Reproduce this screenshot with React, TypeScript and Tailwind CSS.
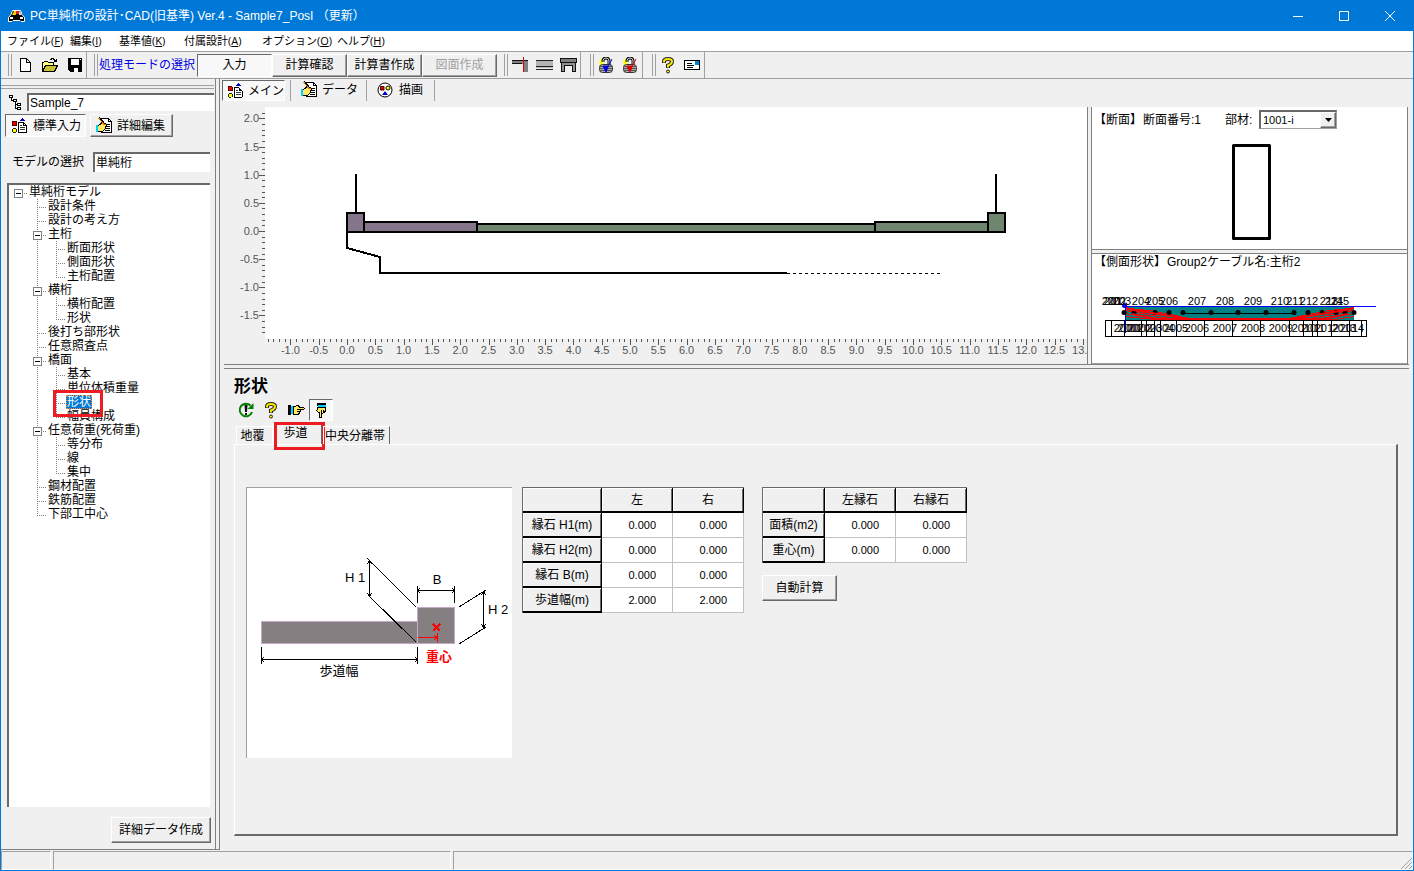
import React, { useState } from 'react';
import clsx from 'clsx';

const raised = 'border border-t-white border-l-white border-r-[#696969] border-b-[#696969] shadow-[inset_-1px_-1px_0_#a0a0a0]';
const pressed = 'border border-t-[#696969] border-l-[#696969] border-r-white border-b-white bg-[#f8f8f8]';
const sunken = 'border-t-2 border-l-2 border-t-[#696969] border-l-[#696969] bg-white';

interface TreeNode {
  label: string;
  level: number;
  open?: boolean;
  last?: boolean;
}

const treeNodes: TreeNode[] = [
  { label: '単純桁モデル', level: 0, open: true },
  { label: '設計条件', level: 1 },
  { label: '設計の考え方', level: 1 },
  { label: '主桁', level: 1, open: true },
  { label: '断面形状', level: 2 },
  { label: '側面形状', level: 2 },
  { label: '主桁配置', level: 2, last: true },
  { label: '横桁', level: 1, open: true },
  { label: '横桁配置', level: 2 },
  { label: '形状', level: 2, last: true },
  { label: '後打ち部形状', level: 1 },
  { label: '任意照査点', level: 1 },
  { label: '橋面', level: 1, open: true },
  { label: '基本', level: 2 },
  { label: '単位体積重量', level: 2 },
  { label: '形状', level: 2 },
  { label: '幅員構成', level: 2, last: true },
  { label: '任意荷重(死荷重)', level: 1, open: true },
  { label: '等分布', level: 2 },
  { label: '線', level: 2 },
  { label: '集中', level: 2, last: true },
  { label: '鋼材配置', level: 1 },
  { label: '鉄筋配置', level: 1 },
  { label: '下部工中心', level: 1, last: true },
];

const menus = [
  { label: 'ファイル', key: 'F', width: 'w-[63px]' },
  { label: '編集', key: 'I', width: 'w-[49px]' },
  { label: '基準値', key: 'K', width: 'w-[65px]' },
  { label: '付属設計', key: 'A', width: 'w-[78px]' },
  { label: 'オプション', key: 'O', width: 'w-[75px]' },
  { label: 'ヘルプ', key: 'H', width: 'w-[63px]' },
];

/* ---------- icons ---------- */

const AppIcon = () => (
  <svg width="17" height="14" viewBox="0 0 17 14">
    <path d="M4.500 1.500h8l1.500 4 2.500 3v4h-3.500l-1-1h-7l-1 1H.5v-4l2.500-3z" fill="#000" stroke="#fff" />
    <path d="M4 6l2-4h2v4z" fill="#ffd000" />
    <path d="M8 2h3v3H8z" fill="#e02020" />
    <path d="M11 2.500h1.500l1 3.500H11z" fill="#ddd" />
    <path d="M2 8h3v2H2zM12 8h3v2h-3z" fill="#fff" />
  </svg>
);

const NewIcon = () => (
  <svg width="16" height="16" viewBox="0 0 16 16" shapeRendering="crispEdges">
    <path d="M3.500 1.500h6l4 4v9h-10zM9.500 1.500v4h4" fill="#fff" stroke="#000" />
  </svg>
);

const OpenIcon = () => (
  <svg width="18" height="16" viewBox="0 0 18 16" shapeRendering="crispEdges">
    <path d="M1.500 14.500v-9h1l1-1h3l1 1h5v3" fill="#ffff80" stroke="#000" />
    <path d="M1.500 14.500l3-6h12l-3 6z" fill="#c8c030" stroke="#000" />
    <path d="M9.500 2.500l2-1 2 1 1 2M15.500 1.500v3h-3" fill="none" stroke="#000" />
  </svg>
);

const SaveIcon = () => (
  <svg width="16" height="16" viewBox="0 0 16 16" shapeRendering="crispEdges">
    <path d="M1 1h14v14H3l-2-2z" fill="#000" />
    <path d="M4 2h8v6H4zM5 11h6v4H5z" fill="#fff" />
    <path d="M5 11h2v4H5z" fill="#000" />
    <path d="M13 2h1v1h-1z" fill="#fff" />
  </svg>
);

const BeamEndIcon = () => (
  <svg width="18" height="16" viewBox="0 0 18 16" shapeRendering="crispEdges">
    <path d="M1 3h16v12h-4V9l-2-2H1z" fill="#808080" />
    <path d="M1 3h16v1H1zM1 6h10v1H1z" fill="#111" />
    <path d="M12 0h1v15h-1z" fill="#e00" />
  </svg>
);

const BeamIcon = () => (
  <svg width="17" height="16" viewBox="0 0 17 16" shapeRendering="crispEdges">
    <path d="M0 3h17v8H0z" fill="#b4b4b4" />
    <path d="M0 3h17v1H0zM0 9h17v1H0zM0 12h17v1H0z" fill="#222" />
  </svg>
);

const PierIcon = () => (
  <svg width="17" height="16" viewBox="0 0 17 16" shapeRendering="crispEdges">
    <path d="M.5 1.500h16v4H.5z" fill="#808080" stroke="#111" />
    <path d="M1.500 5.500h14v9h-3v-6h-8v6h-3z" fill="#909090" stroke="#111" />
  </svg>
);

const LockIcon = ({ color }: { color: string }) => (
  <svg width="16" height="16" viewBox="0 0 16 16">
    <path d="M0 4h3L2 1l3 2 1 3-2 1-3 2 1-3z" fill="#ff0" />
    <path d="M5 5V4q0-3 3-3t3 3v4" fill="none" stroke="#111" strokeWidth="3" />
    <path d="M5 5V4q0-3 3-3t3 3v4" fill="none" stroke="#ccc" />
    <rect x="1.500" y="7.500" width="13" height="8" rx="3" fill="#aaa" stroke="#333" />
    <path d="M2 9.500h12M2 11.500h12M2 13.500h12" stroke="#555" />
    <path d="M5 9h5l-2 6zM8 14l6-12" fill={color} stroke={color} />
  </svg>
);

const HelpIcon = () => (
  <svg width="14" height="17" viewBox="0 0 14 17">
    <path d="M3 6V4.500Q3 2 7 2t4 2.500Q11 7 7 8.500V11" fill="none" stroke="#222" strokeWidth="4" />
    <path d="M3 5.500V4.500Q3 2 7 2t4 2.500Q11 7 7 8.500v2" fill="none" stroke="#ffe800" strokeWidth="2" />
    <circle cx="7" cy="14.500" r="1.500" fill="#ffe800" stroke="#222" />
  </svg>
);

const CardIcon = () => (
  <svg width="17" height="12" viewBox="0 0 17 12" shapeRendering="crispEdges">
    <rect x=".5" y="1.500" width="15" height="9" rx="1" fill="#fff" stroke="#000" />
    <path d="M3 4h5v1H3zM3 6h7v1H3zM3 8h6v1H3z" fill="#000" />
    <path d="M11 2h4v4h-4z" fill="#08c" />
  </svg>
);

const HierarchyIcon = () => (
  <svg width="14" height="16" viewBox="0 0 14 16" shapeRendering="crispEdges">
    <path d="M.5 1.500h3v2h-3zM4.500 5.500h3v2h-3zM8.500 9.500h3v2h-3zM8.500 13.500h3v2h-3z" fill="#fff" stroke="#000" />
    <path d="M2.500 4v2.500H4M6.500 8v6.500H8M6.500 10.500H8" fill="none" stroke="#000" />
  </svg>
);

const InputIcon = () => (
  <svg width="17" height="17" viewBox="0 0 17 17" shapeRendering="crispEdges">
    <path d="M1.500 4.500h4v4h-4z" fill="#e00" stroke="#500" />
    <path d="M2.500 11.500h2l1 1v2l-1 1h-2l-1-1v-2z" fill="#ff0" stroke="#222" />
    <path d="M11.500 1L14 4H9z" fill="#00c" />
    <path d="M7.500 5.500h5l3 3v7h-8zM12.500 5.500v3h3" fill="#fff" stroke="#000" />
    <path d="M9 8h2v1H9zM9 10h5v1H9zM9 12h5v1H9z" fill="#333" />
  </svg>
);

const EditIcon = () => (
  <svg width="17" height="17" viewBox="0 0 17 17" shapeRendering="crispEdges">
    <path d="M5.500 1.500h7l3 3v11h-10z" fill="#fff" stroke="#000" />
    <path d="M12.500 1.500v3h3M10 7h4M11 9h3M10 11h4M9 13h5" fill="none" stroke="#000" />
    <path d="M1 8h2l3-2 4 1 1 2-2 1v2l-2 2H3l-2 1z" fill="#ffe860" stroke="#000" />
    <path d="M0 8h2v7H0z" fill="#0cf" />
    <path d="M3 1l6 7" stroke="#d80" strokeWidth="2" />
    <path d="M3 0l6 7" stroke="#000" />
  </svg>
);

const DrawIcon = () => (
  <svg width="16" height="16" viewBox="0 0 16 16">
    <circle cx="8" cy="8" r="7" fill="#fff" stroke="#000" />
    <path d="M3.500 4.500h3.500v3.500H3.500z" fill="#e00" stroke="#400" />
    <circle cx="11" cy="6" r="2" fill="#ff0" stroke="#000" />
    <path d="M8 9l3 4H5z" fill="#00c" />
  </svg>
);

const RefreshIcon = () => (
  <svg width="16" height="16" viewBox="0 0 16 16">
    <path d="M12.500 3.500A6.300 6.300 0 1 0 14 10" fill="none" stroke="#008000" strokeWidth="2" />
    <path d="M15.500 1v6h-6z" fill="#008000" />
    <path d="M6.500 3h3L9 10H7zM7 11h2v2H7z" fill="#111" />
  </svg>
);

const HandRightIcon = () => (
  <svg width="17" height="12" viewBox="0 0 17 12" shapeRendering="crispEdges">
    <path d="M0 1h3v10H0z" fill="#000" />
    <path d="M3 2h2v8H3z" fill="#0cf" />
    <path d="M5.500 2.500h2l1-1h2l1 2h4l1 1-1 1h-3v2h-1v2h-1v1h-5z" fill="#ffe860" stroke="#000" />
    <path d="M9 5.500h3M9 7.500h2" stroke="#000" />
  </svg>
);

const HandDownIcon = () => (
  <svg width="12" height="17" viewBox="0 0 12 17" shapeRendering="crispEdges">
    <path d="M2 1h9v3H2z" fill="#000" />
    <path d="M3 3h8v2H3z" fill="#0cf" />
    <path d="M2.500 5.500h8v3l-1 2h-1l-1 1h-1v4h-2v-5h-1l-2-2 1-1z" fill="#ffe860" stroke="#000" />
    <path d="M6.500 8v3M8.500 8v2" stroke="#000" />
  </svg>
);

/* ---------- small parts ---------- */

const Grip = () => (
  <span className="flex h-[22px] shrink-0 gap-[2px]">
    <span className="w-px bg-[#a0a0a0]" />
    <span className="w-px bg-[#a0a0a0]" />
  </span>
);

function IconButton({ label, children }: { label: string; children: React.ReactNode }) {
  return (
    <button type="button" aria-label={label} className="flex h-[22px] w-6 shrink-0 items-center justify-center">
      {children}
    </button>
  );
}

function TreeGuide({ node }: { node: TreeNode }) {
  const { level, open, last } = node;
  const width = 19 + level * 19;
  const x = level * 19 + 9;
  const dots = { stroke: '#808080', strokeDasharray: '1 1' };
  return (
    <svg width={width} height="14" className="shrink-0" shapeRendering="crispEdges">
      {level === 2 && <line x1="28.5" x2="28.5" y1="0" y2="14" {...dots} />}
      {level > 0 && <line x1={x + 0.5} x2={x + 0.5} y1="0" y2={last ? 8 : 14} {...dots} />}
      <line x1={x} x2={width - 1} y1="8.5" y2="8.5" {...dots} />
      {open && (
        <>
          <rect x={x - 3.5} y="4.5" width="8" height="8" fill="#fff" stroke="#808080" />
          <line x1={x - 2} x2={x + 3} y1="8.5" y2="8.5" stroke="#000" />
        </>
      )}
    </svg>
  );
}

function SectionChart() {
  const px = (v: number) => 127 + v * 56.6;
  const py = (v: number) => 124 - v * 56.3;
  const xTicks = Array.from({ length: 146 }, (_, i) => (i - 14) / 10);
  const yTicks = Array.from({ length: 40 }, (_, i) => (i - 18) / 10);
  return (
    <svg width="100%" height="257" className="block" shapeRendering="crispEdges">
      <rect x="45" y="0" width="100%" height="232" fill="#fff" />
      <g stroke="#555">
        {xTicks.map(v => (
          <line key={v} x1={Math.round(px(v)) + 0.5} x2={Math.round(px(v)) + 0.5} y1="232" y2={(v * 10) % 5 === 0 ? 238 : 235} />
        ))}
        {yTicks.map(v => (
          <line key={v} x1={(v * 10) % 5 === 0 ? 39 : 42} x2="45" y1={Math.round(py(v)) + 0.5} y2={Math.round(py(v)) + 0.5} />
        ))}
      </g>
      <g fill="#555" fontSize="11">
        {xTicks.filter(v => (v * 10) % 5 === 0 && v >= -1).map(v => (
          <text key={v} x={px(v)} y="247" textAnchor="middle">{v.toFixed(1)}</text>
        ))}
        {yTicks.filter(v => (v * 10) % 5 === 0).map(v => (
          <text key={v} x="39" y={py(v) + 4} textAnchor="end">{v.toFixed(1)}</text>
        ))}
      </g>
      <g stroke="#000" strokeWidth="2">
        <g fill="#85758a">
          <rect x="127" y="106" width="17" height="19" />
          <rect x="144" y="115" width="113" height="10" />
        </g>
        <g fill="#6f8570">
          <rect x="257" y="117" width="398" height="8" />
          <rect x="655" y="115" width="113" height="10" />
          <rect x="768" y="106" width="17" height="19" />
        </g>
        <path d="M136 67v38M776 67v38" />
        <path d="M127 125v16l33 9v16h407" fill="none" />
        <path d="M567 166.500h153" strokeWidth="1" strokeDasharray="3 3" />
      </g>
    </svg>
  );
}

const upperLabels: [string, number][] = [
  ['200', 19], ['201', 21], ['202', 25], ['203', 30], ['204', 49], ['205', 63], ['206', 77], ['207', 105],
  ['208', 133], ['209', 161], ['210', 188], ['211', 203], ['212', 217], ['213', 237], ['214', 242], ['215', 248],
];
const lowerLabels: [string, number][] = [
  ['2000', 34], ['2001', 38], ['2002', 48], ['2003', 58], ['2004', 70], ['2005', 84], ['2006', 105], ['2007', 133],
  ['2008', 161], ['2009', 189], ['2010', 212], ['2011', 221], ['2012', 235], ['2013', 252], ['2014', 260],
];
const cellLines = [13, 19, 32, 49, 54, 62, 68, 84, 112, 140, 168, 197, 211, 220, 225, 239, 257, 269, 274];
const cableDots = [32, 42, 63, 77, 91, 119, 146, 174, 202, 216, 230, 244, 253, 262];

function CableChart() {
  return (
    <svg width="100%" height="93" className="block">
      <g shapeRendering="crispEdges">
        <rect x="33" y="37" width="229" height="13" fill="#008080" />
        <path d="M90 43.500h112" stroke="#000" />
        <path d="M33 37.500l60 11h110l59-11M33 40.500l50 9h130l49-9M33 43.500l40 6h150l39-6M33 46.500l30 3h180l19-3M33 38l28 3 44 9M262 38l-28 3-44 9" fill="none" stroke="#f00" />
        <path d="M70 49h155" stroke="#f00" strokeWidth="2" />
        <path d="M32 36.500h252" stroke="#00f" />
        <g stroke="#000" fill="#fff">
          <rect x="13.500" y="50.500" width="261" height="16" />
          {cellLines.map(x => <path key={x} d={`M${x}.5 51v15`} />)}
        </g>
        <path d="M33.500 37v26" stroke="#00f" />
      </g>
      {cableDots.map(x => <circle key={x} cx={x} cy="42.500" r="2.500" />)}
      <path d="M35 39l55 9M40 44l25 5M260 39l-55 9M256 44l-25 5" stroke="#f00" strokeWidth="2" />
      <circle cx="32.500" cy="35.500" r="2.500" fill="#00f" />
      <g fontSize="11" textAnchor="middle">
        {upperLabels.map(([t, x]) => <text key={t} x={x} y="35">{t}</text>)}
        {lowerLabels.map(([t, x]) => <text key={t} x={x} y="62">{t}</text>)}
      </g>
    </svg>
  );
}

function SidewalkFigure() {
  return (
    <svg width="265" height="270" className="block">
      <g stroke="#c8a8c8" fill="#857f82" shapeRendering="crispEdges">
        <rect x="14.500" y="133.500" width="156" height="22" />
        <rect x="170.500" y="119.500" width="37" height="36" />
      </g>
      <g stroke="#000" fill="none" shapeRendering="crispEdges">
        <path d="M14.500 159v17M170.500 159v17M14 171.500h157M170.500 98v17M207.500 98v17M170 102.500h38" />
        <path d="M122.500 73v35M236.500 104v35" />
        <path d="M17 169l-2 2.500 2 2.500M168 169l2 2.500-2 2.500M173 100l-2 2.500 2 2.500M205 100l2 2.500-2 2.500M120 76l2.500-3 2.500 3M120 105l2.500 3 2.500-3M234 107l2.500-3 2.500 3M234 136l2.500 3 2.500-3" />
        <path d="M120 70l49 49M122 108l47 46M212 119l27-17M212 156l27-17" />
      </g>
      <g stroke="#f00" fill="none" shapeRendering="crispEdges">
        <path d="M171 149.500h19M190.500 145v9M187 147l3 2.500-3 2.500" />
        <path d="M186 136l7 7M193 136l-7 7" strokeWidth="2" />
      </g>
      <g fontSize="13">
        <text x="98" y="94">H 1</text>
        <text x="190" y="96" textAnchor="middle">B</text>
        <text x="241" y="126">H 2</text>
        <text x="92" y="187" textAnchor="middle">歩道幅</text>
        <text x="192" y="173" textAnchor="middle" fill="#f00" fontWeight="bold">重心</text>
      </g>
    </svg>
  );
}

interface GridProps {
  columns: string[];
  rows: { label: string; values: string[] }[];
  headWidth: string;
}

function DataGrid({ columns, rows, headWidth }: GridProps) {
  const head = 'h-[25px] border-r border-b-2 border-black bg-[#f0f0f0] p-0 font-normal shadow-[inset_1px_1px_0_#fff,inset_-1px_0_0_#696969]';
  return (
    <table className="table-fixed border-separate border-spacing-0 border-t border-l border-[#696969]">
      <thead>
        <tr>
          <th className={clsx(head, headWidth)} />
          {columns.map(c => <th key={c} scope="col" className={clsx(head, 'w-[71px]')}>{c}</th>)}
        </tr>
      </thead>
      <tbody>
        {rows.map(row => (
          <tr key={row.label}>
            <th scope="row" className={head}>{row.label}</th>
            {row.values.map((v, i) => (
              <td key={i} className="h-[25px] border-r border-b border-[#c0c0c0] bg-white py-0 pr-4 pl-0 text-right text-[11px]">{v}</td>
            ))}
          </tr>
        ))}
      </tbody>
    </table>
  );
}

/* ---------- window ---------- */

export default function App() {
  const [mode, setMode] = useState('入力');
  const [selected, setSelected] = useState(15);
  const [tab, setTab] = useState('歩道');

  return (
    <div className="flex h-screen min-h-[700px] flex-col overflow-hidden border-x border-b border-[#0078d7] bg-[#f0f0f0] font-['Liberation_Sans','Noto_Sans_CJK_JP',sans-serif] text-xs leading-[14px] whitespace-nowrap text-black">
      {/* Title bar */}
      <header className="flex h-[31px] shrink-0 items-center bg-[#0078d7] pl-[7px] text-white">
        <AppIcon />
        <h1 className="ml-[5px] flex-1">PC単純桁の設計･CAD(旧基準) Ver.4 - Sample7_PosI （更新）</h1>
        <button type="button" aria-label="最小化" className="flex h-full w-[46px] items-center justify-center">
          <svg width="10" height="10" stroke="#fff"><path d="M0 5.500h10" /></svg>
        </button>
        <button type="button" aria-label="最大化" className="flex h-full w-[46px] items-center justify-center">
          <svg width="10" height="10" stroke="#fff" fill="none"><path d="M.5.5h9v9h-9z" /></svg>
        </button>
        <button type="button" aria-label="閉じる" className="flex h-full w-[46px] items-center justify-center">
          <svg width="10" height="10" stroke="#fff"><path d="M0 0l10 10M10 0L0 10" /></svg>
        </button>
      </header>

      {/* Menu */}
      <nav className="flex h-5 shrink-0 items-center bg-white pl-[6px] font-['Open_Sans','Noto_Sans_CJK_JP',sans-serif] text-[11px]">
        {menus.map(m => (
          <button key={m.key} type="button" className={clsx('text-left', m.width)}>
            {m.label}(<u>{m.key}</u>)
          </button>
        ))}
      </nav>

      {/* Toolbar */}
      <div className="flex h-7 shrink-0 items-center border-y border-[#a0a0a0]">
        <div className="flex h-full w-[86px] items-center gap-px border-r border-[#a0a0a0] pl-[7px]">
          <Grip />
          <IconButton label="新規"><NewIcon /></IconButton>
          <IconButton label="開く"><OpenIcon /></IconButton>
          <IconButton label="保存"><SaveIcon /></IconButton>
        </div>
        <div className="flex h-full items-center pl-[7px]">
          <Grip />
          <span className="w-[99px] pl-px text-[#0000e0]">処理モードの選択</span>
          {['入力', '計算確認', '計算書作成', '図面作成'].map(m => (
            <button
              key={m}
              type="button"
              disabled={m === '図面作成'}
              onClick={() => setMode(m)}
              className={clsx('h-[23px] w-[75px] disabled:text-[#a0a0a0]', mode === m ? pressed : raised)}
            >
              {m}
            </button>
          ))}
        </div>
        <div className="flex h-full items-center border-r border-[#a0a0a0] pl-[7px]">
          <Grip />
          <IconButton label="端部"><BeamEndIcon /></IconButton>
          <IconButton label="桁"><BeamIcon /></IconButton>
          <IconButton label="橋脚"><PierIcon /></IconButton>
        </div>
        <div className="flex h-full items-center border-r border-[#a0a0a0] pl-[9px]">
          <Grip />
          <IconButton label="ロック"><LockIcon color="#0000e0" /></IconButton>
          <IconButton label="解除"><LockIcon color="#e00000" /></IconButton>
        </div>
        <div className="flex h-full items-center border-r border-[#a0a0a0] pl-[9px]">
          <Grip />
          <IconButton label="ヘルプ"><HelpIcon /></IconButton>
          <IconButton label="情報"><CardIcon /></IconButton>
        </div>
      </div>

      <main className="flex min-h-0 flex-1">
        {/* Left panel */}
        <aside className="flex w-[214px] shrink-0 flex-col border-b border-[#808080] pt-[6px] pr-px pb-[6px]">
          <div className="h-1 shrink-0 border-y border-[#a0a0a0]" />
          <div className="mt-1 flex h-[18px] shrink-0 items-center gap-1 pl-2">
            <HierarchyIcon />
            <input aria-label="データ名" defaultValue="Sample_7" className={clsx('h-[18px] min-w-0 flex-1 px-px outline-none', sunken)} />
          </div>
          <div className="mt-[3px] flex shrink-0 gap-1 pl-1">
            <button type="button" className={clsx('flex h-[23px] w-[81px] items-center gap-[5px] pl-[5px]', pressed)}>
              <InputIcon />標準入力
            </button>
            <button type="button" className={clsx('flex h-[23px] w-[83px] items-center gap-1 pl-[5px]', raised)}>
              <EditIcon />詳細編集
            </button>
          </div>
          <div className="mt-[15px] flex h-5 shrink-0 items-center pr-1 pl-[11px]">
            <label htmlFor="model" className="w-[81px]">モデルの選択</label>
            <input id="model" defaultValue="単純桁" className={clsx('h-5 min-w-0 flex-1 px-px pb-1 outline-none', sunken)} />
          </div>
          <div className={clsx('mt-[11px] mr-[4px] ml-[6px] min-h-0 flex-1 overflow-hidden', sunken)}>
            <ul role="tree">
              {treeNodes.map((node, i) => (
                <li key={i} role="treeitem" aria-selected={i === selected} className="relative flex h-[14px]">
                  <TreeGuide node={node} />
                  <button
                    type="button"
                    onClick={() => setSelected(i)}
                    className={clsx('px-px', i === selected && 'bg-[#0078d7] text-white outline-1 -outline-offset-1 outline-[#ff8728] outline-dotted')}
                  >
                    {node.label}
                  </button>
                  {i === 15 && <span className="pointer-events-none absolute -top-[5px] left-11 z-10 h-[27px] w-[50px] border-[3px] border-[#ed1c24]" />}
                </li>
              ))}
            </ul>
          </div>
          <button type="button" className={clsx('mt-[10px] mr-[3px] h-[26px] w-[100px] shrink-0 self-end', raised)}>詳細データ作成</button>
        </aside>
        <div className="w-[5px] shrink-0 border-x border-b border-[#808080]" />

        <div className="flex min-w-0 flex-1 flex-col">
          {/* View tabs */}
          <div className="flex h-7 shrink-0 items-start pt-px pl-[2px]">
            <button type="button" className={clsx('flex h-[21px] w-[63px] items-center gap-1 pl-1', pressed)}><InputIcon />メイン</button>
            <span className="ml-[5px] h-[21px] w-px bg-[#a0a0a0]" />
            <button type="button" className="flex h-[19px] w-[75px] items-center gap-1 pl-[10px]"><EditIcon />データ</button>
            <span className="h-[21px] w-px bg-[#a0a0a0]" />
            <button type="button" className="flex h-[19px] w-[67px] items-center gap-[6px] pl-[10px]"><DrawIcon />描画</button>
            <span className="h-[21px] w-px bg-[#a0a0a0]" />
          </div>

          <div className="flex h-[257px] shrink-0 pr-[5px]">
            <div className="min-w-0 flex-1 overflow-hidden"><SectionChart /></div>
            <div className="w-[5px] shrink-0 border-x border-[#808080]" />
            <div className="flex w-[316px] shrink-0 flex-col border-r border-[#808080] bg-white">
              <div className="flex-1">
                <div className="flex items-center pt-[3px] pl-[2px]">
                  <span className="w-[49px]">【断面】</span>
                  <span className="w-[82px]">断面番号:1</span>
                  <label htmlFor="member" className="w-[34px]">部材:</label>
                  <span className="relative">
                    <select id="member" className={clsx('block h-[19px] w-[78px] appearance-none border-r border-b border-[#a0a0a0] pl-[2px] text-[11px]', sunken)}>
                      <option>1001-i</option>
                    </select>
                    <span className={clsx('pointer-events-none absolute top-[2px] right-px flex h-4 w-4 items-center justify-center bg-[#f0f0f0]', raised)}>
                      <svg width="7" height="4"><path d="M0 0h7L3.500 4z" /></svg>
                    </span>
                  </span>
                </div>
                <svg width="100%" height="112" className="block">
                  <rect x="141.500" y="16.500" width="36" height="93" fill="none" stroke="#000" strokeWidth="3" strokeLinejoin="round" />
                </svg>
              </div>
              <div className="h-[5px] shrink-0 border-y border-[#808080] bg-[#f0f0f0]" />
              <div className="h-[110px] shrink-0 border-b border-[#a0a0a0]">
                <div className="flex h-4 items-center pl-[2px]">
                  <span className="w-[73px]">【側面形状】</span>
                  <span>Group2ケーブル名:主桁2</span>
                </div>
                <CableChart />
              </div>
            </div>
          </div>
          <div className="mr-1 ml-1 h-[5px] shrink-0 border-y border-[#808080]" />

          {/* Input form */}
          <section className="flex min-h-0 flex-1 flex-col pt-[9px] pr-[15px] pb-[14px] pl-[14px]">
            <h2 className="h-[18px] text-[17px] leading-[18px] font-bold">形状</h2>
            <div className="mt-[3px] flex h-[22px] shrink-0 items-center gap-px">
              <IconButton label="更新"><RefreshIcon /></IconButton>
              <IconButton label="ヘルプ"><HelpIcon /></IconButton>
              <IconButton label="次へ"><HandRightIcon /></IconButton>
              <button type="button" aria-label="下へ" className={clsx('flex h-[22px] w-6 items-center justify-center', pressed)}><HandDownIcon /></button>
            </div>
            <div role="tablist" className="mt-[2px] flex h-[21px] shrink-0 items-end pl-[2px]">
              {['地覆', '歩道', '中央分離帯'].map(t => (
                <button
                  key={t}
                  type="button"
                  role="tab"
                  aria-selected={tab === t}
                  onClick={() => setTab(t)}
                  className={clsx(
                    'relative border-t border-r border-l border-white text-center',
                    tab === t ? 'h-[21px] w-[50px] border-r-2 border-r-[#696969] pr-1 pb-[2px]' : 'h-[18px]',
                    t === '地覆' && 'w-[37px] pr-1',
                    t === '中央分離帯' && 'border-r-[#696969] pr-1 pl-px'
                  )}
                >
                  {t}
                  {t === '歩道' && <span className="pointer-events-none absolute -top-[2px] left-0 h-[28px] w-[51px] border-[3px] border-[#ed1c24]" />}
                </button>
              ))}
            </div>
            <div className="flex min-h-0 flex-1 items-start border-t border-r-2 border-b-2 border-l border-t-white border-r-[#696969] border-b-[#696969] border-l-white pt-[42px] pl-[11px]">
              <div className="border-t border-l border-[#a0a0a0] bg-white"><SidewalkFigure /></div>
              <div className="ml-[10px]">
                <DataGrid
                  columns={['左', '右']}
                  headWidth="w-[79px]"
                  rows={[
                    { label: '縁石 H1(m)', values: ['0.000', '0.000'] },
                    { label: '縁石 H2(m)', values: ['0.000', '0.000'] },
                    { label: '縁石 B(m)', values: ['0.000', '0.000'] },
                    { label: '歩道幅(m)', values: ['2.000', '2.000'] },
                  ]}
                />
              </div>
              <div className="ml-[18px]">
                <DataGrid
                  columns={['左縁石', '右縁石']}
                  headWidth="w-[62px]"
                  rows={[
                    { label: '面積(m2)', values: ['0.000', '0.000'] },
                    { label: '重心(m)', values: ['0.000', '0.000'] },
                  ]}
                />
                <button type="button" className={clsx('mt-3 h-[26px] w-[75px]', raised)}>自動計算</button>
              </div>
            </div>
          </section>
        </div>
      </main>

      {/* Status bar */}
      <footer className="mt-px flex h-[19px] shrink-0 gap-[2px]">
        <div className="w-[50px] border border-t-[#a0a0a0] border-r-white border-b-white border-l-[#a0a0a0]" />
        <div className="w-[398px] border border-t-[#a0a0a0] border-r-white border-b-white border-l-[#a0a0a0]" />
        <div className="flex flex-1 items-end justify-end border border-t-[#a0a0a0] border-r-white border-b-white border-l-[#a0a0a0]">
          <svg width="12" height="12" stroke="#a0a0a0"><path d="M1 12L12 1M5 12l7-7M9 12l3-3" /></svg>
        </div>
      </footer>
    </div>
  );
}
